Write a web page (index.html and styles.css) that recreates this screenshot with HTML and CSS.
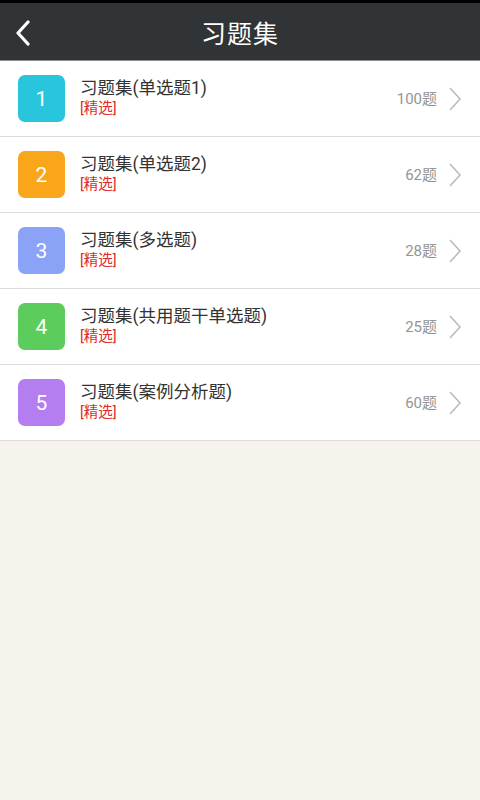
FILE: index.html
```html
<!DOCTYPE html>
<html lang="zh-CN">
<head>
    <meta charset="UTF-8">
    <meta name="viewport" content="width=device-width, initial-scale=1.0">
    <title>习题集</title>
    <link rel="stylesheet" href="styles.css">
</head>
<body>
    <div class="status-bar"></div>
    <div class="header">
        <span class="back">
            <svg width="18" height="26" viewBox="0 0 18 26"><path d="M14 2 L4 13 L14 24" fill="none" stroke="#fff" stroke-width="3.2" stroke-linecap="round" stroke-linejoin="round"/></svg>
        </span>
        <h1>习题集</h1>
    </div>

    <ul class="list">
        <li class="item">
            <div class="num cyan">1</div>
            <div class="info">
                <div class="name">习题集(单选题1)</div>
                <div class="tag">[精选]</div>
            </div>
            <div class="count">100题</div>
            <svg class="arrow" width="14" height="24" viewBox="0 0 14 24"><path d="M2 1 L12 12 L2 23" fill="none" stroke="#bbb" stroke-width="1.6"/></svg>
        </li>
        <li class="item">
            <div class="num orange">2</div>
            <div class="info">
                <div class="name">习题集(单选题2)</div>
                <div class="tag">[精选]</div>
            </div>
            <div class="count">62题</div>
            <svg class="arrow" width="14" height="24" viewBox="0 0 14 24"><path d="M2 1 L12 12 L2 23" fill="none" stroke="#bbb" stroke-width="1.6"/></svg>
        </li>
        <li class="item">
            <div class="num blue">3</div>
            <div class="info">
                <div class="name">习题集(多选题)</div>
                <div class="tag">[精选]</div>
            </div>
            <div class="count">28题</div>
            <svg class="arrow" width="14" height="24" viewBox="0 0 14 24"><path d="M2 1 L12 12 L2 23" fill="none" stroke="#bbb" stroke-width="1.6"/></svg>
        </li>
        <li class="item">
            <div class="num green">4</div>
            <div class="info">
                <div class="name">习题集(共用题干单选题)</div>
                <div class="tag">[精选]</div>
            </div>
            <div class="count">25题</div>
            <svg class="arrow" width="14" height="24" viewBox="0 0 14 24"><path d="M2 1 L12 12 L2 23" fill="none" stroke="#bbb" stroke-width="1.6"/></svg>
        </li>
        <li class="item">
            <div class="num purple">5</div>
            <div class="info">
                <div class="name">习题集(案例分析题)</div>
                <div class="tag">[精选]</div>
            </div>
            <div class="count">60题</div>
            <svg class="arrow" width="14" height="24" viewBox="0 0 14 24"><path d="M2 1 L12 12 L2 23" fill="none" stroke="#bbb" stroke-width="1.6"/></svg>
        </li>
    </ul>
</body>
</html>
```

FILE: styles.css
```css
body {
    margin: 0;
    padding: 0;
    background-color: #f6f3ed;
    font-family: Roboto, "Noto Sans CJK SC", sans-serif;
    color: #333;
}
.status-bar {
    height: 3px;
    background-color: #000;
}
.header {
    height: 57px;
    background-color: #303436;
    border-bottom: 1px solid #8a8c8d;
    display: flex;
    align-items: center;
    justify-content: center;
    position: relative;
}
.back {
    position: absolute;
    left: 14px;
    top: 17px;
    line-height: 0;
}
.header h1 {
    margin: 0;
    color: #fff;
    font-size: 25px;
    font-weight: normal;
    letter-spacing: 1px;
}
.list {
    list-style: none;
    margin: 0;
    padding: 0;
    background-color: #fff;
}
.item {
    height: 75px;
    display: flex;
    align-items: center;
    padding: 0 18px;
    border-bottom: 1px solid #dcdcdc;
}
.num {
    width: 47px;
    height: 47px;
    border-radius: 7px;
    color: #fff;
    font-size: 21px;
    display: flex;
    align-items: center;
    justify-content: center;
    flex-shrink: 0;
}
.cyan { background-color: #29c5dc; }
.orange { background-color: #f9a61a; }
.blue { background-color: #8aa3f7; }
.green { background-color: #5ccd5c; }
.purple { background-color: #b57ef0; }
.info {
    flex: 1;
    margin-left: 15px;
    margin-top: -2px;
}
.name {
    font-size: 17.5px;
    line-height: 22px;
    color: #333;
}
.tag {
    margin-top: 1px;
    font-size: 14.5px;
    line-height: 18px;
    color: #e02a2a;
}
.count {
    font-size: 15px;
    color: #959595;
    margin-right: 11px;
    margin-bottom: 2px;
}
.arrow {
    flex-shrink: 0;
}
```
